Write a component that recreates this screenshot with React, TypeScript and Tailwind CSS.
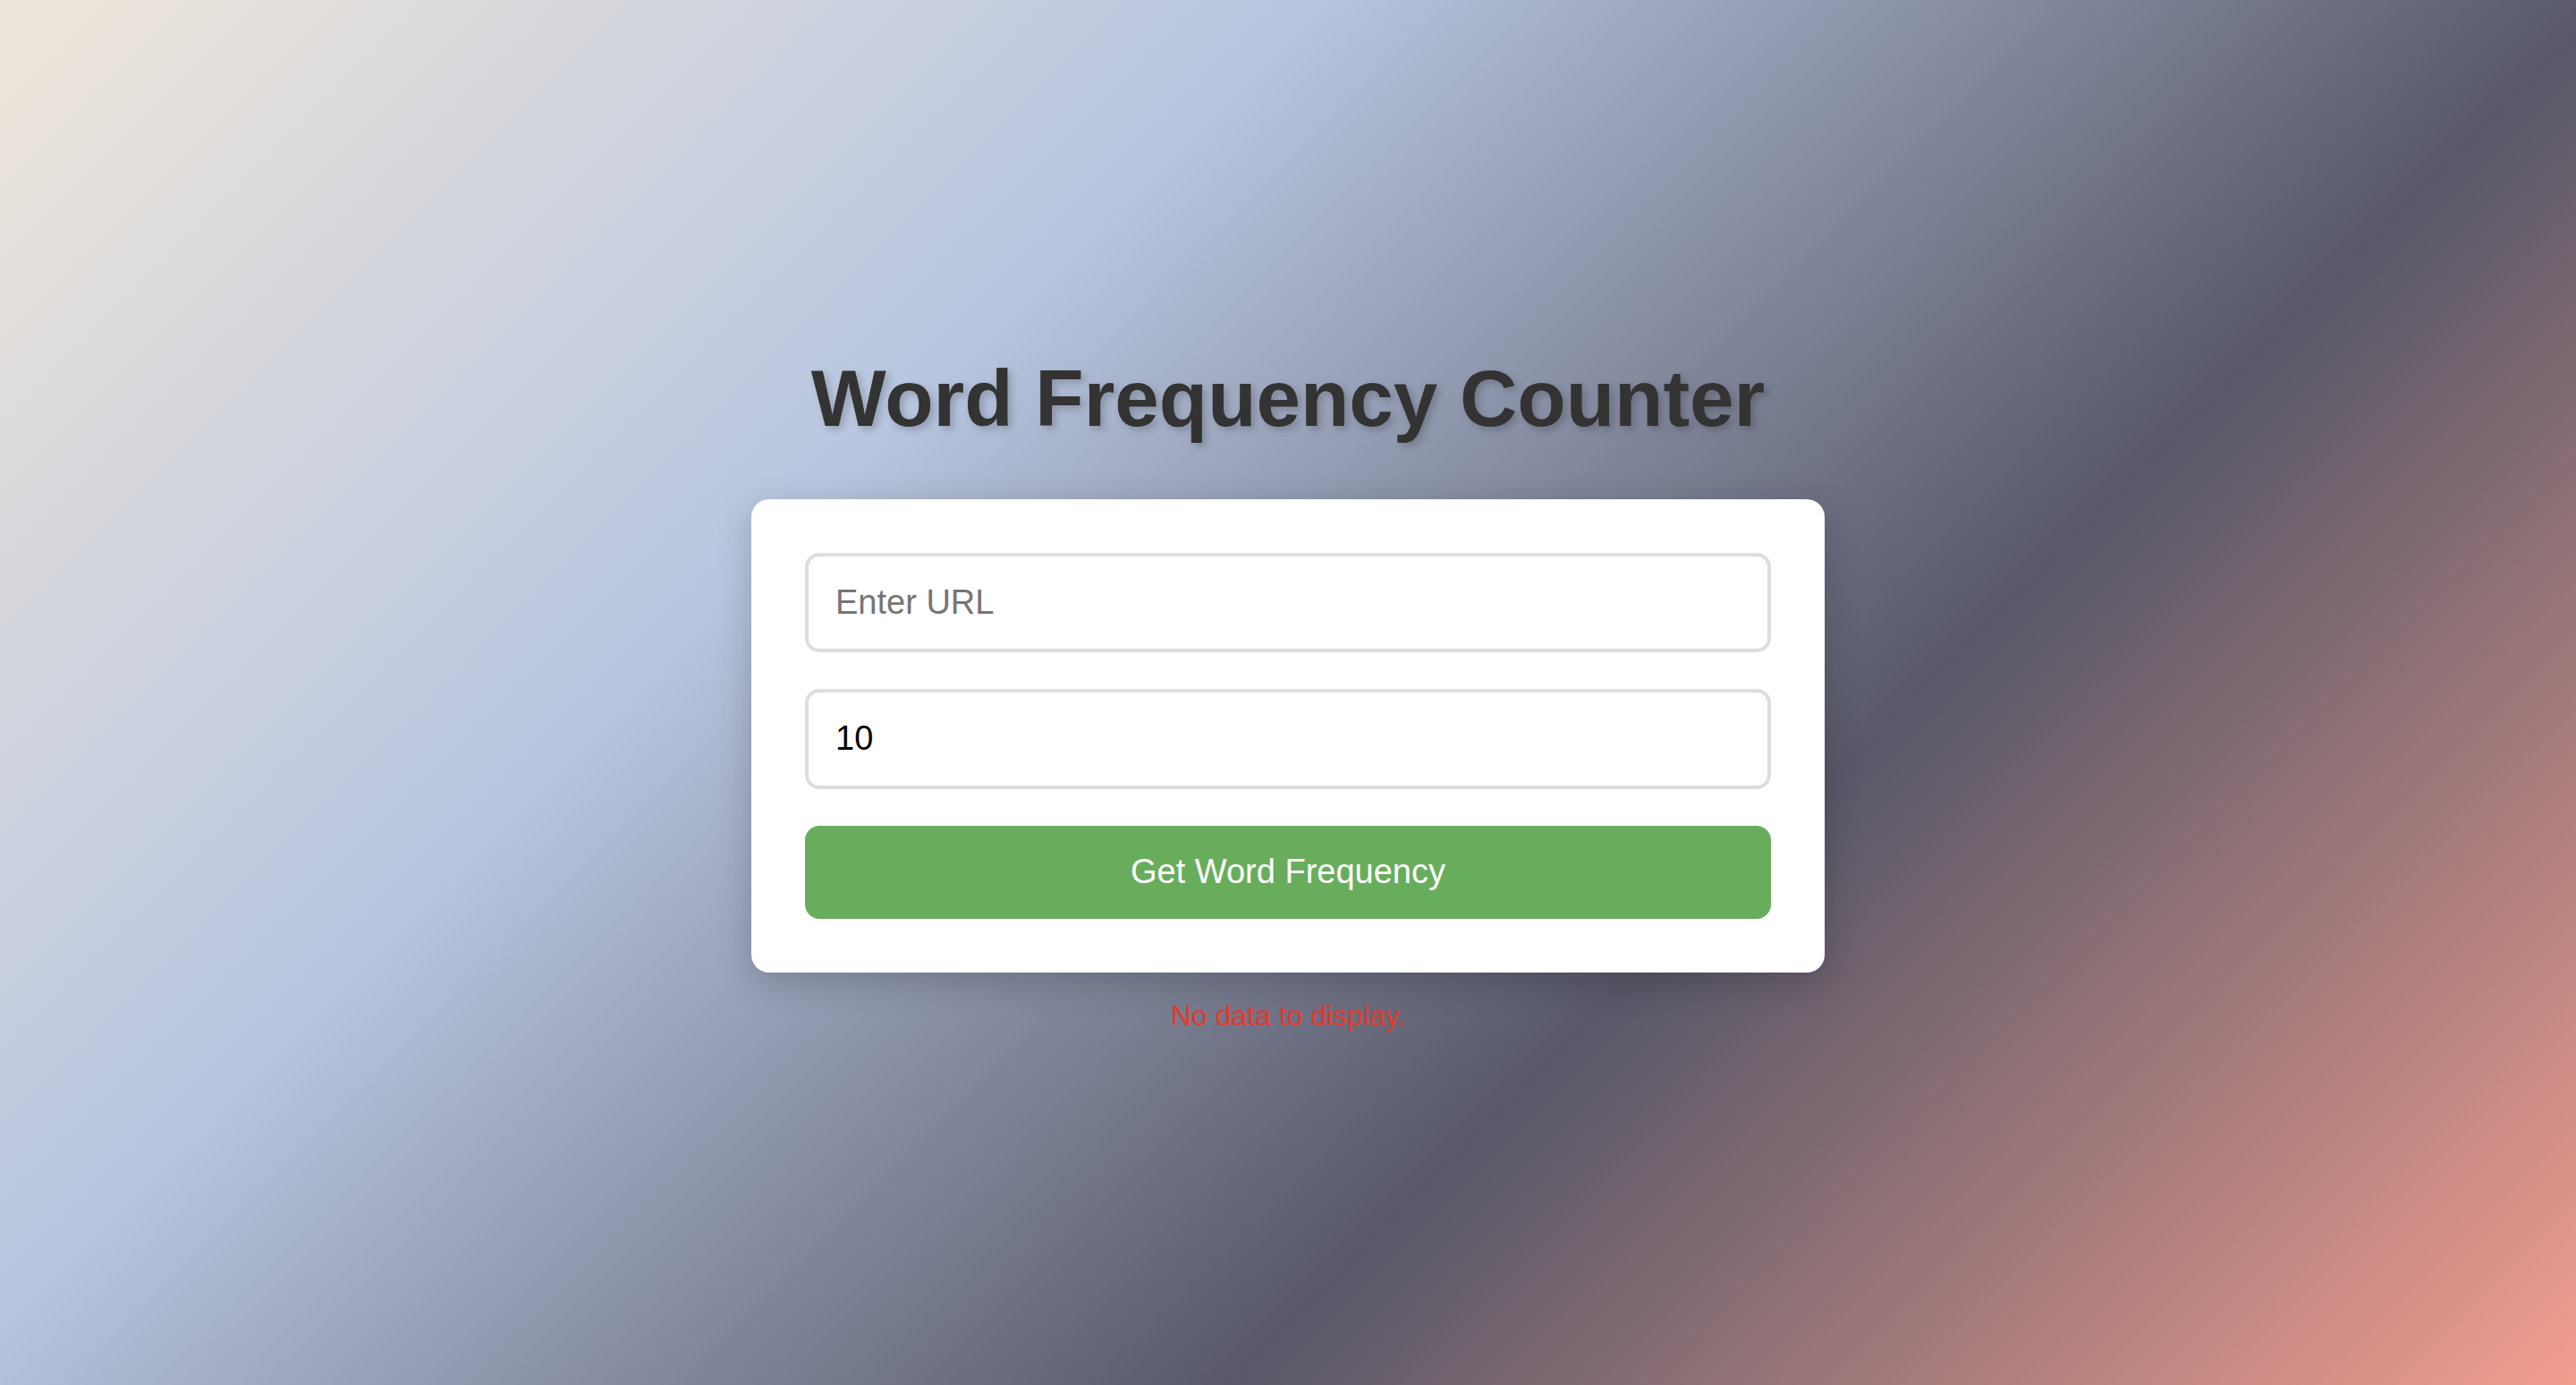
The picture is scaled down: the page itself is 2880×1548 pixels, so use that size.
import { useState } from 'react';

export default function App() {
    const [url, setUrl] = useState('');
    const [count, setCount] = useState('10');

    return (
        <div
            className="min-h-screen w-full flex flex-col items-center justify-center bg-[linear-gradient(135deg,#efe6da_0%,#b8c6e0_33%,#585868_66%,#f29e8f_100%)]"
            style={{ fontFamily: '"Liberation Sans", Arial, sans-serif' }}
        >
            <h1 className="text-[89px] leading-[1.16] font-bold text-[#333333] mb-[60px] [text-shadow:4px_4px_8px_rgba(0,0,0,0.2)]">
                Word Frequency Counter
            </h1>

            <div className="w-[1200px] bg-white rounded-[20px] p-[60px] shadow-[0_10px_40px_rgba(0,0,0,0.2)]">
                <form className="flex flex-col" onSubmit={(e) => e.preventDefault()}>
                    <input
                        type="text"
                        placeholder="Enter URL"
                        value={url}
                        onChange={(e) => setUrl(e.target.value)}
                        className="w-full border-4 border-[#dddddd] rounded-[16px] px-[30px] py-[30px] text-[38px] leading-[1.15] text-black placeholder:text-[#757575] outline-none mb-[41px]"
                    />
                    <input
                        type="number"
                        value={count}
                        onChange={(e) => setCount(e.target.value)}
                        className="w-full border-4 border-[#dddddd] rounded-[16px] px-[30px] py-[30px] text-[38px] leading-[1.15] text-black outline-none mb-[41px] [appearance:textfield] [&::-webkit-inner-spin-button]:appearance-none [&::-webkit-outer-spin-button]:appearance-none"
                    />
                    <button
                        type="submit"
                        className="w-full bg-[#68ad5c] text-white rounded-[16px] py-[30px] text-[38px] leading-[1.15]"
                    >
                        Get Word Frequency
                    </button>
                </form>
            </div>

            <p className="mt-[30px] text-[32px] leading-[1.15] text-[#e6372a]">No data to display.</p>
        </div>
    );
}
